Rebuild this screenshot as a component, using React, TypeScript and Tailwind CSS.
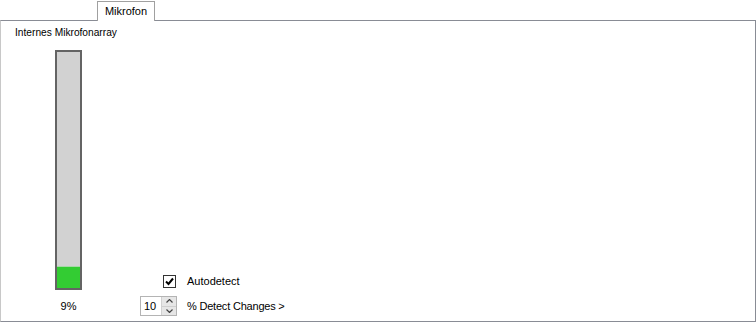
import React from "react";

// Windows-Forms-like tab page: "Mikrofon" with a level meter and detect controls
export default function App() {
  const level = 9;

  return (
    <div
      className="w-[756px] h-[323px] bg-white flex flex-col text-[11px] text-black leading-[13px]"
      style={{ fontFamily: '"Liberation Sans", Arial, sans-serif' }}
    >
      {/* tab strip */}
      <div className="h-[20px] flex items-end">
        <div className="ml-[97px] w-[58px] h-[20px] border border-b-0 border-[#a0a0a0] bg-white flex items-center justify-center pb-[1px] relative top-[1px] z-10">
          Mikrofon
        </div>
      </div>

      {/* page */}
      <div className="h-[302px] border border-[#898c95] border-l-[#c8c8c8] flex flex-col">
        <div className="pl-[14px] pt-[5px] text-[10.2px]">Internes Mikrofonarray</div>

        <div className="flex mt-[11px]">
          {/* meter */}
          <div className="ml-[54px] w-[27px] flex flex-col items-center">
            <div className="w-[27px] h-[240px] border-2 border-[#646464] bg-[#d2d2d2] flex flex-col justify-end">
              <div className="h-[22px] bg-[#33cc33] border-t border-[#a8d8a8]" />
            </div>
            <div className="mt-[10px]">{level}%</div>
          </div>

          {/* controls */}
          <div className="ml-[58px] self-end flex flex-col gap-[8px] mb-[-3px]">
            <div className="flex items-center ml-[23px]">
              <div className="w-[13px] h-[13px] border border-[#333] bg-white flex items-center justify-center">
                <svg width="11" height="11" viewBox="0 0 11 11">
                  <path d="M2 5.5 L4.5 8 L9 2.5" stroke="#000" strokeWidth="2" fill="none" />
                </svg>
              </div>
              <span className="ml-[11px]">Autodetect</span>
            </div>
            <div className="flex items-center">
              <div className="w-[37px] h-[20px] border border-[#b4b4b4] flex">
                <div className="flex-1 pl-[3px] flex items-center">10</div>
                <div className="w-[15px] flex flex-col bg-[#e6e6e6] border-l border-[#d0d0d0]">
                  <div className="flex-1 flex items-center justify-center border-b border-[#cfcfcf]">
                    <svg width="7" height="4" viewBox="0 0 7 4">
                      <path d="M0.5 3.5 L3.5 0.5 L6.5 3.5" stroke="#444" strokeWidth="1.2" fill="none" />
                    </svg>
                  </div>
                  <div className="flex-1 flex items-center justify-center">
                    <svg width="7" height="4" viewBox="0 0 7 4">
                      <path d="M0.5 0.5 L3.5 3.5 L6.5 0.5" stroke="#444" strokeWidth="1.2" fill="none" />
                    </svg>
                  </div>
                </div>
              </div>
              <span className="ml-[10px] tracking-[-0.2px]">% Detect Changes &gt;</span>
            </div>
          </div>
        </div>
      </div>
    </div>
  );
}
